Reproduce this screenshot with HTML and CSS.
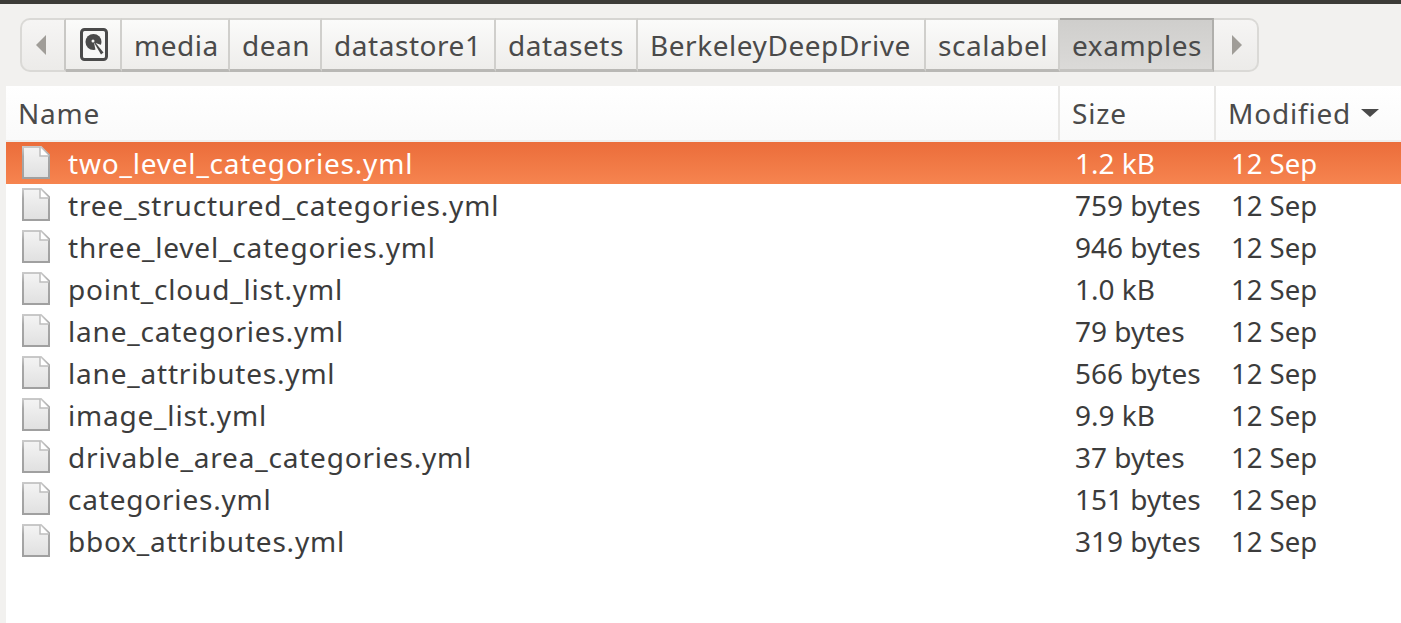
FILE: index.html
```html
<!DOCTYPE html>
<html lang="en">
<head>
<title>examples</title>
<meta charset="utf-8">
<link rel="stylesheet" href="styles.css">
</head>
<body>
<div class="topline"></div>
<div class="toolbar">
    <div class="pathbar">
        <div class="arrow arrow-left"><span class="tri tri-left"></span></div>
        <div class="crumb crumb-disk">
            <svg width="28" height="33" viewBox="0 0 28 33">
                <rect x="1.5" y="1.500" width="25" height="30" rx="3" fill="#f7f7f6" stroke="#4a4a4a" stroke-width="3"/>
                <circle cx="13.500" cy="14" r="8" fill="#4a4a4a"/>
                <path d="M14 14.500L23 17.500V27H16.500z" fill="#f7f7f6"/>
                <circle cx="13" cy="13" r="1.500" fill="#f7f7f6"/>
                <path d="M14 14.500l.8-.6L23.500 24.500 21 26.500z" fill="#4a4a4a"/>
            </svg>
        </div>
        <div class="crumb">media</div>
        <div class="crumb">dean</div>
        <div class="crumb">datastore1</div>
        <div class="crumb">datasets</div>
        <div class="crumb">BerkeleyDeepDrive</div>
        <div class="crumb">scalabel</div>
        <div class="crumb active">examples</div>
        <div class="arrow arrow-right"><span class="tri tri-right"></span></div>
    </div>
</div>
<div class="list">
    <div class="head">
        <div class="col-name">Name</div>
        <div class="col-size">Size</div>
        <div class="col-mod">Modified <span class="sort"></span></div>
    </div>
    <div class="row selected"><div class="cell-name"><svg class="file"><use href="#doc"/></svg>two_level_categories.yml</div><div class="cell-size">1.2 kB</div><div class="cell-mod">12 Sep</div></div>
    <div class="row"><div class="cell-name"><svg class="file"><use href="#doc"/></svg>tree_structured_categories.yml</div><div class="cell-size">759 bytes</div><div class="cell-mod">12 Sep</div></div>
    <div class="row"><div class="cell-name"><svg class="file"><use href="#doc"/></svg>three_level_categories.yml</div><div class="cell-size">946 bytes</div><div class="cell-mod">12 Sep</div></div>
    <div class="row"><div class="cell-name"><svg class="file"><use href="#doc"/></svg>point_cloud_list.yml</div><div class="cell-size">1.0 kB</div><div class="cell-mod">12 Sep</div></div>
    <div class="row"><div class="cell-name"><svg class="file"><use href="#doc"/></svg>lane_categories.yml</div><div class="cell-size">79 bytes</div><div class="cell-mod">12 Sep</div></div>
    <div class="row"><div class="cell-name"><svg class="file"><use href="#doc"/></svg>lane_attributes.yml</div><div class="cell-size">566 bytes</div><div class="cell-mod">12 Sep</div></div>
    <div class="row"><div class="cell-name"><svg class="file"><use href="#doc"/></svg>image_list.yml</div><div class="cell-size">9.9 kB</div><div class="cell-mod">12 Sep</div></div>
    <div class="row"><div class="cell-name"><svg class="file"><use href="#doc"/></svg>drivable_area_categories.yml</div><div class="cell-size">37 bytes</div><div class="cell-mod">12 Sep</div></div>
    <div class="row"><div class="cell-name"><svg class="file"><use href="#doc"/></svg>categories.yml</div><div class="cell-size">151 bytes</div><div class="cell-mod">12 Sep</div></div>
    <div class="row"><div class="cell-name"><svg class="file"><use href="#doc"/></svg>bbox_attributes.yml</div><div class="cell-size">319 bytes</div><div class="cell-mod">12 Sep</div></div>
</div>
<svg width="0" height="0" class="defs">
    <defs>
        <linearGradient id="paper" x1="0" y1="0" x2="0" y2="1">
            <stop offset="0" stop-color="#f4f4f4"/>
            <stop offset="1" stop-color="#e0e0e0"/>
        </linearGradient>
        <linearGradient id="edge" x1="0" y1="0" x2="0" y2="1">
            <stop offset="0" stop-color="#c9c9c9"/>
            <stop offset=".3" stop-color="#a8a8a8"/>
            <stop offset="1" stop-color="#a0a0a0"/>
        </linearGradient>
        <symbol id="doc" viewBox="0 0 28 33">
            <path d="M1 1h18l8 8v23H1z" fill="url(#paper)" stroke="url(#edge)" stroke-width="2"/>
            <path d="M18 1v9h9z" fill="#fff"/>
            <path d="M18 1v9h9" fill="none" stroke="#bdbdbd" stroke-width="1.500"/>
        </symbol>
    </defs>
</svg>
</body>
</html>
```
FILE: styles.css
```css
html,body{margin: 0;padding: 0;}
body{width: 1401px;height: 623px;overflow: hidden;background: #f2f1ef;font-family: "Noto Sans","Open Sans",sans-serif;font-size: 28px;color: #3c3c3c;}
.topline{height: 4px;background: #3c3b37;}
.toolbar{height: 82px;padding: 14px 0 0 20px;box-sizing: border-box;}
.pathbar{display: grid;grid-template-columns: 46px 56px 108px 92px 174px 142px 288px 134px 154px 45px;width: 1239px;height: 54px;letter-spacing: .55px;}
.arrow{display: flex;align-items: center;justify-content: center;box-sizing: border-box;border: 2px solid #dad9d6;background: linear-gradient(#f6f5f4,#ecebe9);}
.arrow-left{border-radius: 10px 0 0 10px;border-right-color: #c9c8c5;padding-right: 4px;}
.arrow-right{border-radius: 0 10px 10px 0;border-left: none;padding-left: 3px;}
.tri{width: 0;height: 0;border-top: 10px solid transparent;border-bottom: 10px solid transparent;}
.tri-left{border-right: 10px solid #a09d98;}
.tri-right{border-left: 10px solid #a09d98;}
.crumb{display: flex;align-items: center;padding-left: 12px;box-sizing: border-box;border-top: 2px solid #d6d5d2;border-bottom: 3px solid #b9b8b5;border-right: 2px solid #d0cfcc;background: linear-gradient(#fbfbfa,#eeedeb);color: #4a4a4a;white-space: nowrap;}
.crumb-disk{padding-left: 14px;}
.crumb.active{background: linear-gradient(#cfcecc,#dbdad8);color: #4a4a4a;border-top-color: #a9a8a5;border-right-color: #b0afac;border-bottom-color: #c4c3c0;}
.list{margin-left: 6px;background: #fff;height: 537px;}
.head{display: grid;grid-template-columns: 1054px 156px 1fr;height: 56px;border-bottom: 2px solid #efeeec;box-sizing: border-box;background: linear-gradient(#fff,#fafafa);color: #4a4a4a;letter-spacing: .8px;}
.head > div{display: flex;align-items: center;padding-left: 12px;border-right: 2px solid #e8e7e5;}
.head > .col-mod{border-right: none;gap: 6px;}
.sort{width: 0;height: 0;margin-left: 4px;border-left: 9px solid transparent;border-right: 9px solid transparent;border-top: 8px solid #4a4a4a;}
.row{display: grid;grid-template-columns: 1054px 156px 1fr;height: 42px;align-items: center;color: #3c3c3c;}
.row.selected{background: linear-gradient(#eb6d3a,#f6844f);color: #fff;}
.cell-name{display: flex;align-items: center;padding-left: 16px;gap: 18px;letter-spacing: .8px;}
.cell-size{padding-left: 15px;}
.cell-mod{padding-left: 15px;font-size: 27.5px;}
.file{width: 28px;height: 33px;margin-bottom: 1px;flex: none;}
.defs{position: absolute;}
```
